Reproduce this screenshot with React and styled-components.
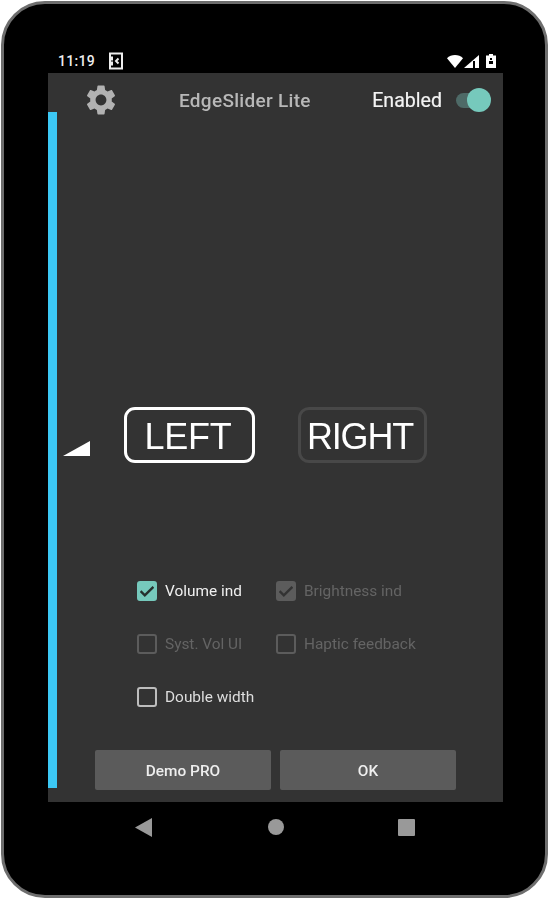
import React from 'react';
import styled, { createGlobalStyle } from 'styled-components';

const Global = createGlobalStyle`
  html, body { margin: 0; padding: 0; background: #fff; }
  body { font-family: Roboto, "Noto Sans", sans-serif; }
  * { box-sizing: border-box; }
`;
const Page = styled.div`
  width: 548px; height: 900px; padding: 1px 0 2px 1px; background: #fff; overflow: hidden;
`;
const Device = styled.div`
  width: 547px; height: 897px; background: #000; border: 3px solid #6e6e6e; border-radius: 44px;
  display: flex; flex-direction: column; padding: 0 41px 0 44px;
  filter: blur(0.45px);
`;
const StatusBar = styled.div`
  height: 69px; display: flex; align-items: flex-end; justify-content: space-between;
  padding: 0 8px 3px 10px; color: #eee;
`;
const StatusGroup = styled.div`
  display: flex; align-items: center; gap: ${p => p.$gap}px; margin-bottom: ${p => p.$lift || 0}px;
`;
const Time = styled.span`
  font-size: 14px; font-weight: 500; letter-spacing: 0.3px; line-height: 18px;
`;
const Screen = styled.div`
  width: 455px; height: 729px; background: #333; display: flex; flex-direction: column;
  padding-bottom: 14px;
`;
const Header = styled.div`
  height: 39px; display: flex; align-items: center; padding: 0 12px 0 38px;
`;
const Gear = styled.div`
  width: 30px; height: 30px; margin-top: 15px; color: #b2b2b2; display: flex;
`;
const Title = styled.div`
  flex: 1; margin-top: 15px; padding-left: 63px; font-size: 19px; font-weight: 500; color: #b8b8b8;
  letter-spacing: 0.3px;
`;
const EnabledLabel = styled.div`
  margin-top: 16px; font-size: 19.6px; color: #f4f4f4; margin-right: 14px;
  -webkit-text-stroke: 0.2px #f4f4f4;
`;
const Switch = styled.div`
  width: 35px; height: 24px; margin-top: 15px; position: relative; display: flex; align-items: center;
`;
const Track = styled.div`
  width: 30px; height: 15px; border-radius: 8px; background: #4e6a67;
`;
const Thumb = styled.div`
  position: absolute; right: 0; top: 0; width: 24px; height: 24px; border-radius: 50%; background: #76c9bc;
`;
const Body = styled.div`
  flex: 1; display: flex; min-height: 0;
`;
const EdgeBar = styled.div`
  width: 9px; background: #3cc8f5;
`;
const Content = styled.div`
  flex: 1; display: flex; flex-direction: column; position: relative;
`;
const Wedge = styled.svg`
  position: absolute; left: 6px; top: 329px;
`;
const Sides = styled.div`
  display: flex; gap: 43px; padding: 295px 0 0 67px;
`;
const SideButton = styled.div`
  width: ${p => p.$w}px; height: 56px; border-radius: 11px; padding: 3px ${p => p.$nudge}px 0 0;
  border: 3px solid ${p => (p.$active ? '#fff' : '#484848')};
  display: flex; align-items: center; justify-content: center;
  font-family: "Liberation Sans", Arial, sans-serif; font-size: 36px; color: #fff;
  letter-spacing: ${p => p.$track}px;
`;
const Options = styled.div`
  display: grid; grid-template-columns: 139px 1fr; grid-auto-rows: 53px;
  padding: 118px 0 0 80px;
`;
const Option = styled.div`
  height: 20px; display: flex; align-items: center; gap: 8px;
  font-size: 15.4px; color: ${p => p.$tone};
`;
const Box = styled.div`
  width: 20px; height: 20px; border-radius: 3px; display: flex; align-items: center; justify-content: center;
  border: 2px solid ${p => p.$color};
  background: ${p => (p.$checked ? p.$color : 'transparent')};
`;
const Actions = styled.div`
  margin-top: auto; margin-bottom: -2px; display: flex; gap: 9px; padding-left: 38px;
`;
const ActionButton = styled.div`
  width: 176px; height: 40px; background: #5b5b5b; border-radius: 2px; display: flex;
  align-items: center; justify-content: center; padding-top: 1px;
  font-size: 15.4px; font-weight: 500; color: #eee;
`;
const NavBar = styled.div`
  flex: 1; display: flex; align-items: flex-start; padding: 16px 0 0 87px; gap: 115px;
`;
const NavCircle = styled.div`
  width: 16px; height: 16px; border-radius: 50%; background: #999; margin-top: 1px; margin-left: 1px;
`;
const NavSquare = styled.div`
  width: 17px; height: 17px; border-radius: 1px; background: #999; margin: 1px 0 0 -1px;
`;

const Check = ({ color }) => (
  <svg width="14" height="14" viewBox="0 0 14 14">
    <path d="M0.6 7.2l4.2 4.2L13.4 2.8" fill="none" stroke={color} strokeWidth="2.4" />
  </svg>
);

const CheckOption = ({ label, checked, disabled }) => {
  const color = disabled ? '#5c5c5c' : checked ? '#76c9bc' : '#bdbdbd';
  const tone = disabled ? '#646464' : checked ? '#f0f0f0' : '#dedede';
  return (
    <Option $tone={tone}>
      <Box $color={color} $checked={checked}>
        {checked && <Check color={disabled ? '#333' : '#26302e'} />}
      </Box>
      {label}
    </Option>
  );
};

const GearIcon = () => (
  <svg width="30" height="30" viewBox="2.2 2 19.6 20" fill="currentColor">
    <path d="M19.14 12.94c.04-.3.06-.61.06-.94 0-.32-.02-.64-.07-.94l2.03-1.58c.18-.14.23-.41.12-.61l-1.92-3.32c-.12-.22-.37-.29-.59-.22l-2.39.96c-.5-.38-1.03-.7-1.62-.94l-.36-2.54c-.04-.24-.24-.41-.48-.41h-3.84c-.24 0-.43.17-.47.41l-.36 2.54c-.59.24-1.13.57-1.62.94l-2.39-.96c-.22-.08-.47 0-.59.22L2.74 8.87c-.12.21-.08.47.12.61l2.03 1.58c-.05.3-.09.63-.09.94s.02.64.07.94l-2.03 1.58c-.18.14-.23.41-.12.61l1.92 3.32c.12.22.37.29.59.22l2.39-.96c.5.38 1.03.7 1.62.94l.36 2.54c.05.24.24.41.48.41h3.84c.24 0 .44-.17.47-.41l.36-2.54c.59-.24 1.13-.56 1.62-.94l2.39.96c.22.08.47 0 .59-.22l1.92-3.32c.12-.22.07-.47-.12-.61l-2.01-1.58zM12 15.6c-1.98 0-3.6-1.62-3.6-3.6s1.62-3.6 3.6-3.6 3.6 1.62 3.6 3.6-1.62 3.6-3.6 3.6z" />
  </svg>
);

const NotifIcon = () => (
  <svg width="14" height="18" viewBox="0 0 14 18" fill="none">
    <path d="M1 1.5h12v15H1v-4h2v-2H1v-3h2v-2H1z" stroke="#eee" strokeWidth="2" />
    <path d="M9.5 6.5L7 9l2.5 2.5" stroke="#eee" strokeWidth="2" />
  </svg>
);

const WifiIcon = () => (
  <svg width="16" height="13" viewBox="0 0 16 13"><path d="M0 3.2C2 1.2 5 0 8 0s6 1.2 8 3.2L8 13z" fill="#fff" /></svg>
);
const SignalIcon = () => (
  <svg width="15" height="13" viewBox="0 0 15 13"><path d="M0 13L15 0v13z" fill="#fff" /><path d="M9 6h2v7H9z" fill="#000" /></svg>
);
const BatteryIcon = () => (
  <svg width="10" height="14" viewBox="0 0 10 14" style={{ marginLeft: 6 }}><path d="M3 0h4v1.5h3V14H0V1.5h3z" fill="#fff" /><path d="M4 4h2v2H4zM3 7h4v3H3z" fill="#000" /></svg>
);

export default function App() {
  return (
    <Page>
      <Global />
      <Device>
        <StatusBar>
          <StatusGroup $gap={14}>
            <Time>11:19</Time>
            <NotifIcon />
          </StatusGroup>
          <StatusGroup $gap={1} $lift={2}>
            <WifiIcon />
            <SignalIcon />
            <BatteryIcon />
          </StatusGroup>
        </StatusBar>
        <Screen>
          <Header>
            <Gear><GearIcon /></Gear>
            <Title>EdgeSlider Lite</Title>
            <EnabledLabel>Enabled</EnabledLabel>
            <Switch><Track /><Thumb /></Switch>
          </Header>
          <Body>
            <EdgeBar />
            <Content>
              <Wedge width="27" height="15" viewBox="0 0 27 15"><path d="M0 15L27 0v15z" fill="#fff" /></Wedge>
              <Sides>
                <SideButton $w={131} $track={-0.2} $nudge={3} $active>LEFT</SideButton>
                <SideButton $w={129} $track={-1.2} $nudge={5}>RIGHT</SideButton>
              </Sides>
              <Options>
                <CheckOption label="Volume ind" checked />
                <CheckOption label="Brightness ind" checked disabled />
                <CheckOption label="Syst. Vol UI" disabled />
                <CheckOption label="Haptic feedback" disabled />
                <CheckOption label="Double width" />
              </Options>
              <Actions>
                <ActionButton>Demo PRO</ActionButton>
                <ActionButton>OK</ActionButton>
              </Actions>
            </Content>
          </Body>
        </Screen>
        <NavBar>
          <svg width="17" height="19" viewBox="0 0 17 19"><path d="M0 9.5L17 0v19z" fill="#999" /></svg>
          <NavCircle />
          <NavSquare />
        </NavBar>
      </Device>
    </Page>
  );
}
